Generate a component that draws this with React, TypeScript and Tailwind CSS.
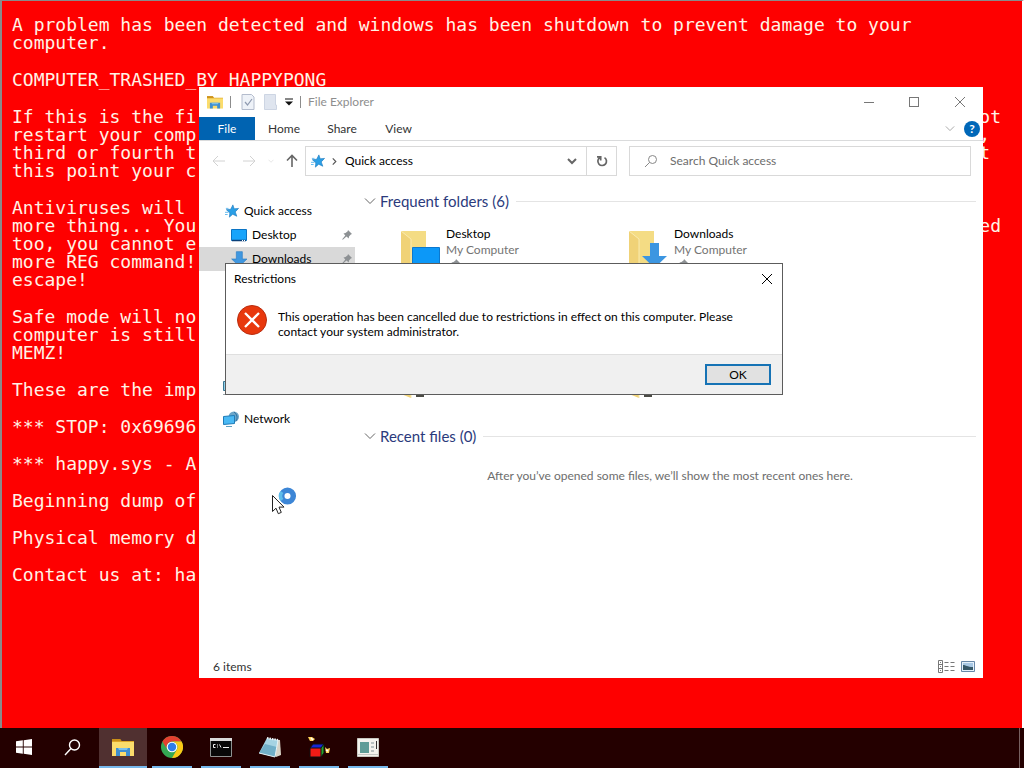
import type { ReactNode } from "react";

const crashBlocks: [string, string?, string?][][] = [
  [["A problem has been detected and windows has been shutdown to prevent damage to your"], ["computer."]],
  [["COMPUTER_TRASHED_BY_HAPPYPONG"]],
  [
    ["If this is the fi", "ot", "pr-[21px]"],
    ["restart your comp", ",", "pr-[32px]"],
    ["third or fourth t", "t", "pr-[32px]"],
    ["this point your c"],
  ],
  [["Antiviruses will"], ["more thing... You", "ed", "pr-[21px]"], ["too, you cannot e"], ["more REG command!"], ["escape!"]],
  [["Safe mode will no"], ["computer is still"], ["MEMZ!"]],
  [["These are the imp"]],
  [["*** STOP: 0x69696"]],
  [["*** happy.sys - A"]],
  [["Beginning dump of"]],
  [["Physical memory d"]],
  [["Contact us at: ha"]],
];

function CrashScreen() {
  return (
    <main className="flex flex-1 flex-col gap-[19px] overflow-hidden border-l-2 border-r-2 border-t border-l-[#8a8a8a] border-r-white border-t-[#8a8a8a] bg-[#fe0000] pl-[10px] pt-[15px] font-['DejaVu_Sans_Mono',monospace] text-[18px] leading-[18px] text-[#fff3e6]">
      {crashBlocks.map((lines, i) => (
        <div key={i}>
          {lines.map(([left, right, pad], j) => (
            <p key={j} className={`flex justify-between whitespace-pre ${pad ?? ""}`}>
              <span>{left}</span>
              {right && <span>{right}</span>}
            </p>
          ))}
        </div>
      ))}
    </main>
  );
}

function ExplorerIcon({ className }: { className: string }) {
  return (
    <svg viewBox="0 0 22 18" className={className} aria-hidden="true">
      <path d="M0 1h8l1.500 2H22v3H0z" fill="#dfa526" />
      <path d="M0 4h22v14H0z" fill="#fbdc6c" />
      <path d="M0 1h8l1.500 2H0z" fill="#c98e18" />
      <path d="M4 10h14v8h-4v-4H8v4H4z" fill="#3f8fd0" />
      <path d="M6 10h10l-1 2H7z" fill="#79c0ec" />
    </svg>
  );
}

function StarIcon() {
  return (
    <svg viewBox="0 0 16 16" className="h-[14px] w-[14px]" aria-hidden="true">
      <path d="M9 1l1.500 4.500L15.500 5l-3.800 4 1.800 5-4.700-2.300L5 15l.5-5L1.500 6.500 6.500 6z" fill="#2a9fe6" stroke="#1b78bd" strokeWidth=".7" />
      <path d="M0 9.500h4M0 12h3M1 5h3" stroke="#54b4ee" />
    </svg>
  );
}

function DesktopIcon() {
  return (
    <svg viewBox="0 0 16 13" className="h-[13px] w-4" aria-hidden="true">
      <path d="M.5.5h15v11H.5z" fill="#18a4fb" stroke="#0b74c4" />
      <path d="M1 11.500h14" stroke="#0a3f78" strokeWidth="1.500" />
      <path d="M11 11.500h1m1 0h1" stroke="#fff" />
    </svg>
  );
}

function DownArrowIcon({ className }: { className: string }) {
  return (
    <svg viewBox="0 0 24 24" className={className} aria-hidden="true">
      <path d="M8 1h9v11h7L12.500 23 1 12h7z" fill="#3f97e0" stroke="#2c7fc6" />
    </svg>
  );
}

function PcIcon() {
  return (
    <svg viewBox="0 0 16 16" className="h-4 w-4" aria-hidden="true">
      <path d="M.5 2.500h15v9H.5z" fill="#8ed1ee" stroke="#3b7690" />
      <path d="M0 15.500h16" stroke="#9aa5ab" />
    </svg>
  );
}

function NetworkIcon() {
  return (
    <svg viewBox="0 0 16 16" className="h-4 w-4" aria-hidden="true">
      <circle cx="10.800" cy="5.800" r="5.200" fill="#6ba5c8" />
      <path d="M11 1c3 2 4 6 2 9" stroke="#2f6f9e" fill="none" />
      <path d="M.5 5.500l11-1v8l-11 1z" fill="#4ab9f4" stroke="#1e7bb8" />
      <path d="M3 15.500h6" stroke="#5f9fc0" />
    </svg>
  );
}

function PinIcon() {
  return (
    <svg viewBox="0 0 10 10" className="h-[10px] w-[10px]" aria-hidden="true">
      <path d="M6 0l4 4-1.200.4L7 6.500 6.700 8.500 4.500 6.600.8 9.800.2 9.200 3.300 5.500 1.500 3.400l2-.3L5.700 1.200z" fill="#8d9194" />
    </svg>
  );
}

function Chevron({ className }: { className: string }) {
  return (
    <svg viewBox="0 0 12 8" className={className} fill="none" stroke="currentColor" aria-hidden="true">
      <path d="M1 1.500l5 5 5-5" />
    </svg>
  );
}

function CloseIcon({ className }: { className: string }) {
  return (
    <svg viewBox="0 0 12 12" className={className} stroke="currentColor" aria-hidden="true">
      <path d="M1 1l10 10M11 1L1 11" />
    </svg>
  );
}

function TitleBar() {
  return (
    <header className="flex h-[30px] items-center pl-2">
      <ExplorerIcon className="h-[14px] w-4" />
      <span className="ml-[7px] h-3 w-px bg-[#8c8c8c]" />
      <button aria-label="Properties" className="ml-[10px]">
        <svg viewBox="0 0 14 16" className="h-4 w-[14px]" fill="none">
          <path d="M1 .5h9.500L13 3v12.500H1z" fill="#eef2f8" stroke="#b4bccd" />
          <path d="M4 8l2.500 3L11 5" stroke="#8f9ab0" strokeWidth="1.200" />
        </svg>
      </button>
      <button aria-label="New folder" className="ml-[9px]">
        <svg viewBox="0 0 13 16" className="h-4 w-[13px]">
          <path d="M.5.500h11V11h1v4.500H.5z" fill="#dfe5ef" stroke="#cdd5e3" />
        </svg>
      </button>
      <button aria-label="Customize Quick Access Toolbar" className="ml-2">
        <svg viewBox="0 0 8 8" className="h-2 w-2">
          <path d="M0 1h8" stroke="#111" />
          <path d="M0 3.500h8L4 7.500z" fill="#111" />
        </svg>
      </button>
      <span className="ml-[7px] h-3 w-px bg-[#8c8c8c]" />
      <h1 className="ml-[7px] text-[#8e8e8e]">File Explorer</h1>
      <div className="ml-auto flex text-[#777]">
        <button aria-label="Minimize" className="flex h-[30px] w-[45px] items-center justify-center">
          <span className="h-px w-[10px] bg-current" />
        </button>
        <button aria-label="Maximize" className="flex h-[30px] w-[46px] items-center justify-center">
          <span className="h-[10px] w-[10px] border border-current" />
        </button>
        <button aria-label="Close" className="flex h-[30px] w-[46px] items-center justify-center">
          <CloseIcon className="h-3 w-3" />
        </button>
      </div>
    </header>
  );
}

function Ribbon() {
  return (
    <div className="flex h-6 items-center border-b border-[#dadbdc] text-[#333]">
      <button className="h-full w-14 bg-[#0063b1] text-white">File</button>
      <button className="w-[58px]">Home</button>
      <button className="w-[58px]">Share</button>
      <button className="w-[55px]">View</button>
      <button aria-label="Expand the Ribbon" className="ml-auto text-[#999]">
        <Chevron className="h-[7px] w-[10px]" />
      </button>
      <button aria-label="Help" className="ml-[9px] mr-[3px] flex h-4 w-4 items-center justify-center rounded-full bg-[#0067b8] text-[12px] leading-4 font-bold text-white">
        ?
      </button>
    </div>
  );
}

function AddressRow() {
  return (
    <div className="flex items-center pl-[13px] pr-3 pt-[5px]">
      <button aria-label="Back" className="text-[#d2d2d2]">
        <svg viewBox="0 0 14 12" className="h-3 w-[14px]" fill="none" stroke="currentColor"><path d="M6 1L1 6l5 5M1 6h12" /></svg>
      </button>
      <button aria-label="Forward" className="ml-4 text-[#d2d2d2]">
        <svg viewBox="0 0 14 12" className="h-3 w-[14px]" fill="none" stroke="currentColor"><path d="M8 1l5 5-5 5M13 6H1" /></svg>
      </button>
      <button aria-label="Recent locations" className="ml-3 text-[#cfcfcf]">
        <Chevron className="h-1 w-[6px]" />
      </button>
      <button aria-label="Up" className="ml-[12px] text-[#666]">
        <svg viewBox="0 0 12 14" className="h-[14px] w-3" fill="none" stroke="currentColor" strokeWidth="1.600"><path d="M1 6.500l5-5 5 5M6 2v11" /></svg>
      </button>
      <div className="ml-[7px] flex h-[30px] w-[312px] border border-[#d9d9d9] text-black">
        <div className="flex flex-1 items-center pl-[5px]">
          <StarIcon />
          <svg viewBox="0 0 5 8" className="ml-[7px] h-[7px] w-[5px]" fill="none" stroke="#555" strokeWidth="1.300"><path d="M.5.500L4 4 .5 7.500" /></svg>
          <span className="ml-[8px]">Quick access</span>
          <button aria-label="Previous locations" className="ml-auto mr-[9px] text-[#666]">
            <svg viewBox="0 0 10 7" className="h-[7px] w-[10px]" fill="none" stroke="currentColor" strokeWidth="2"><path d="M1 1l4 4 4-4" /></svg>
          </button>
        </div>
        <button aria-label="Refresh" className="flex w-[30px] items-center justify-center border-l border-[#d9d9d9] text-[#666]">
          <svg viewBox="0 0 12 12" className="h-3 w-3" fill="none" stroke="currentColor" strokeWidth="1.700"><path d="M8.500 2.600A4.300 4.300 0 1 1 4 2.500M1 1.800h3.700v3.700" /></svg>
        </button>
      </div>
      <label className="ml-3 flex h-[30px] flex-1 items-center border border-[#d9d9d9] pl-[14px]">
        <svg viewBox="0 0 14 14" className="h-[14px] w-[14px]" fill="none" stroke="#888"><circle cx="8.500" cy="5.500" r="4" /><path d="M5.600 8.400L1 13" /></svg>
        <input aria-label="Search Quick access" placeholder="Search Quick access" className="ml-3 min-w-0 flex-1 outline-none placeholder:text-[#6d6d6d]" />
      </label>
    </div>
  );
}

function NavItem({ icon, label, inset = "pl-6", pinned, selected }: { icon: ReactNode; label: string; inset?: string; pinned?: boolean; selected?: boolean }) {
  return (
    <a href="#" className={`flex h-6 items-center ${inset} ${selected ? "bg-[#d9d9d9]" : ""}`}>
      <span className="flex w-[21px] items-center">{icon}</span>
      {label}
      {pinned && <span className="ml-auto mr-[3px]"><PinIcon /></span>}
    </a>
  );
}

function NavPane() {
  return (
    <nav className="w-[156px] pt-[23px] text-black">
      <NavItem label="Quick access" icon={<StarIcon />} inset="pl-[26px] [&>span]:w-[19px]" />
      <NavItem label="Desktop" icon={<DesktopIcon />} inset="pl-8" pinned />
      <NavItem label="Downloads" icon={<DownArrowIcon className="h-4 w-4" />} inset="pl-8" pinned selected />
      <div className="mt-[104px] flex flex-col gap-2">
        <a href="#" aria-label="This PC" className="flex h-6 items-center pl-6"><PcIcon /></a>
        <NavItem label="Network" icon={<NetworkIcon />} />
      </div>
    </nav>
  );
}

function FolderIcon({ badge }: { badge: ReactNode }) {
  return (
    <svg viewBox="0 0 40 48" className="h-12 w-10 shrink-0" aria-hidden="true">
      <path d="M0 0h25v40H0z" fill="#f4dc84" />
      <path d="M0 0l10 8v39L0 43z" fill="#f0d277" />
      <path d="M0 0l10 8v39" fill="none" stroke="#f9eab0" />
      {badge}
    </svg>
  );
}

const screenBadge = <path d="M11.500 16.500h27v18h-27z" fill="#0c98f8" stroke="#0b78cf" />;
const arrowBadge = <path d="M21 12h9v13h8L25.500 37 13 25h8z" fill="#3c96e1" />;
const photoBadge = <path d="M15 38h8v8h-8z" fill="#4c4c46" />;

const folders: { id: string; name?: string; badge?: ReactNode }[] = [
  { id: "desktop", name: "Desktop", badge: screenBadge },
  { id: "downloads", name: "Downloads", badge: arrowBadge },
  { id: "third" },
  { id: "fourth" },
  { id: "fifth", badge: photoBadge },
  { id: "sixth", badge: photoBadge },
];

function SectionTitle({ children }: { children: ReactNode }) {
  return (
    <h2 className="flex h-6 items-center text-[15px] text-[#2b3a7c]">
      <Chevron className="mr-[4px] h-2 w-3 text-[#666]" />
      {children}
      <span className="ml-[7px] h-px flex-1 bg-[#e4e4e4]" />
    </h2>
  );
}

function Content() {
  return (
    <section className="flex-1 pl-[9px] pr-[7px] pt-[13px]">
      <SectionTitle>Frequent folders (6)</SectionTitle>
      <ul className="mt-[18px] grid grid-cols-[228px_228px] gap-y-3 pl-[37px]">
        {folders.map((f) => (
          <li key={f.id} className="flex h-12 gap-[5px]">
            <FolderIcon badge={f.badge} />
            {f.name && (
              <div className="-mt-[5px] leading-4 text-[#747474]">
                <p className="text-black">{f.name}</p>
                <p>My Computer</p>
                <span className="ml-1 mt-[1px] block"><PinIcon /></span>
              </div>
            )}
          </li>
        ))}
      </ul>
      <div className="mt-[25px]">
        <SectionTitle>Recent files (0)</SectionTitle>
      </div>
      <p className="mt-[20px] text-center leading-4 text-[#6d6d6d]">After you’ve opened some files, we’ll show the most recent ones here.</p>
    </section>
  );
}

function ExplorerWindow() {
  return (
    <section aria-label="File Explorer" className="absolute left-[199px] top-[87px] flex min-h-[591px] w-[784px] flex-col bg-white text-[12px] text-[#222]">
      <TitleBar />
      <Ribbon />
      <AddressRow />
      <div className="flex flex-1">
        <NavPane />
        <Content />
      </div>
      <footer className="flex h-[23px] items-center pl-[14px] pr-2 text-[#333]">
        6 items
        <button aria-label="Details view" className="ml-auto">
          <svg viewBox="0 0 17 13" className="h-[13px] w-[17px]" fill="none" stroke="#777">
            <path d="M.5.500h4v12h-4zM.5 4.500h4M.5 8.500h4M6.500 2.500h4m2 0h4M6.500 6.500h4m2 0h4M6.500 10.500h4m2 0h4M2 2.500h1M2 6.500h1M2 10.500h1" />
          </svg>
        </button>
        <button aria-label="Large icons view" className="ml-[6px]">
          <svg viewBox="0 0 14 11" className="h-[11px] w-[14px]">
            <path d="M.5.500h13v10H.5z" fill="#e5f1fb" stroke="#6787a8" />
            <path d="M2 2h10v7H2z" fill="#a8c8e4" />
            <path d="M2 4c3 0 4 2 10 2v3H2z" fill="#365868" />
          </svg>
        </button>
      </footer>
    </section>
  );
}

function RestrictionsDialog() {
  return (
    <div role="dialog" aria-labelledby="dialog-title" className="absolute left-[225px] top-[263px] w-[558px] border border-[#5c5c5c] bg-white text-[12px] text-black">
      <div className="flex h-[29px] items-center justify-between pl-2 pr-[9px]">
        <h2 id="dialog-title">Restrictions</h2>
        <button aria-label="Close"><CloseIcon className="h-3 w-3" /></button>
      </div>
      <div className="flex h-[61px] gap-[11px] pl-[11px] pt-[12px]">
        <svg viewBox="0 0 30 30" className="h-[30px] w-[30px]" aria-hidden="true">
          <circle cx="15" cy="15" r="14.500" fill="#e8380d" stroke="#b92d10" />
          <path d="M8 8l14 14M22 8L8 22" stroke="#fff" strokeWidth="2.300" />
        </svg>
        <p className="pt-[4px] leading-[15px]">
          This operation has been cancelled due to restrictions in effect on this computer. Please
          <br />
          contact your system administrator.
        </p>
      </div>
      <div className="flex h-10 items-center justify-end border-t border-[#dfdfdf] bg-[#f0f0f0] pr-[11px]">
        <button className="h-[21px] w-[66px] border-2 border-[#1673b5] bg-[#e1e1e1] leading-4">OK</button>
      </div>
    </div>
  );
}

function BusyCursor() {
  return (
    <svg viewBox="0 0 28 30" className="absolute left-[271px] top-[486px] h-[30px] w-7" aria-hidden="true">
      <circle cx="16.500" cy="10" r="5.800" fill="none" stroke="#3d86d6" strokeWidth="5.500" />
      <path d="M11 14a6.500 6.500 0 0 1 0-8" fill="none" stroke="#5fbdea" strokeWidth="3.500" />
      <path d="M1.500 9.500v16l3.500-3.300 2.300 5.500 3-1.300-2.300-5.300h5z" fill="#fff" stroke="#222" />
    </svg>
  );
}

function TaskButton({ label, open, active, children }: { label: string; open?: boolean; active?: boolean; children: ReactNode }) {
  return (
    <button aria-label={label} className={`flex w-12 flex-col items-center ${active ? "bg-[#503030]" : ""}`}>
      <span className="flex flex-1 items-center justify-center">{children}</span>
      <span className={`h-[2px] ${active ? "w-full" : "w-10"} ${open ? "bg-[#76b9ed]" : ""}`} />
    </button>
  );
}

function Taskbar() {
  return (
    <footer className="flex h-10 gap-px bg-[#240000]">
      <div className="mr-[2px] flex">
        <TaskButton label="Start">
          <svg viewBox="0 0 16 16" className="h-4 w-4" fill="#fff"><path d="M0 2.200l6.800-.9v6.200H0zM7.700 1.200L16 0v7.500H7.700zM0 8.500h6.800v6.200L0 13.800zM7.700 8.500H16V16l-8.300-1.200z" /></svg>
        </TaskButton>
        <TaskButton label="Search">
          <svg viewBox="0 0 17 17" className="h-[17px] w-[17px]" fill="none" stroke="#fff" strokeWidth="1.400"><circle cx="10.500" cy="6" r="5" /><path d="M7 9.500L1 16" /></svg>
        </TaskButton>
      </div>
      <TaskButton label="File Explorer" open active>
        <ExplorerIcon className="h-[18px] w-[22px]" />
      </TaskButton>
      <TaskButton label="Google Chrome" open>
        <svg viewBox="0 0 24 24" className="h-[22px] w-[22px]">
          <circle cx="12" cy="12" r="12" fill="#34a853" />
          <path d="M1.600 6A12 12 0 0 1 22.400 6H12a6 6 0 0 0-5.200 9z" fill="#e4402f" />
          <path d="M22.400 6A12 12 0 0 1 12 24l5.200-9A6 6 0 0 0 12 6z" fill="#fbc916" />
          <circle cx="12" cy="12" r="5.800" fill="#fff" />
          <circle cx="12" cy="12" r="4.600" fill="#2f7de9" />
        </svg>
      </TaskButton>
      <TaskButton label="Command Prompt" open>
        <svg viewBox="0 0 22 19" className="h-[19px] w-[22px]">
          <path d="M.5.500h21v18H.5z" fill="#080808" stroke="#8e9291" />
          <path d="M0 0h22v3H0z" fill="#dadada" />
          <path d="M5.500 6.500h-2v3h2M7.500 6.500v1m0 1v1M9.500 6.500l1.500 3M13 9.500h6" stroke="#ececec" fill="none" />
        </svg>
      </TaskButton>
      <TaskButton label="Notepad" open>
        <svg viewBox="0 0 22 22" className="h-[22px] w-[22px]">
          <path d="M8 3l13 1 1 15-5 2z" fill="#d8d4c8" />
          <path d="M8 2l11 2-3 17L0 17z" fill="#a5d3e3" />
          <path d="M6 8l12 3-2 10L0 17z" fill="#4f98b6" opacity=".6" />
          <path d="M8 2l11 2" stroke="#eef7fa" strokeWidth="2" strokeDasharray="1.500 1" />
          <path d="M0 17l16 4 3-17" stroke="#e5f3f7" fill="none" />
        </svg>
      </TaskButton>
      <TaskButton label="Cube program" open>
        <svg viewBox="0 0 22 22" className="h-[22px] w-[22px]">
          <path d="M2 12h11v9H2z" fill="#f21b16" />
          <path d="M2 12l3-4h11l-3 4z" fill="#1727d6" />
          <path d="M13 12l3-4v9l-3 4z" fill="#25a52b" />
          <path d="M2 12h11v9H2zM2 12l3-4h11l-3 4M16 8v9l-3 4" fill="none" stroke="#111" />
          <path d="M0 1h4l3 2-2 2H2zM17 11l2 2 3-1-1 5h-3z" fill="#ffd45a" />
          <path d="M3 2l2 2M18 14l2 1" stroke="#fff" strokeWidth="1.500" />
        </svg>
      </TaskButton>
      <TaskButton label="Application" open>
        <svg viewBox="0 0 22 19" className="h-[19px] w-[22px]">
          <path d="M.5.500h21v18H.5z" fill="#f3f3ee" stroke="#c8c8c2" />
          <path d="M3 4h9v11H3z" fill="#5e9c97" />
          <path d="M14 4h3v2h-3zM14 8h3v2h-3zM14 12h3v2h-3z" fill="#b8c1c1" />
          <path d="M19.500 3v8" stroke="#333" />
          <path d="M1 16.500h20" stroke="#c4c8c4" />
        </svg>
      </TaskButton>
      <span className="ml-auto mr-1 w-px bg-[#776060]" />
    </footer>
  );
}

export default function App() {
  return (
    <div className="relative flex min-h-screen flex-col overflow-hidden font-[Lato,'Open_Sans',sans-serif]">
      <CrashScreen />
      <Taskbar />
      <ExplorerWindow />
      <RestrictionsDialog />
      <BusyCursor />
    </div>
  );
}
